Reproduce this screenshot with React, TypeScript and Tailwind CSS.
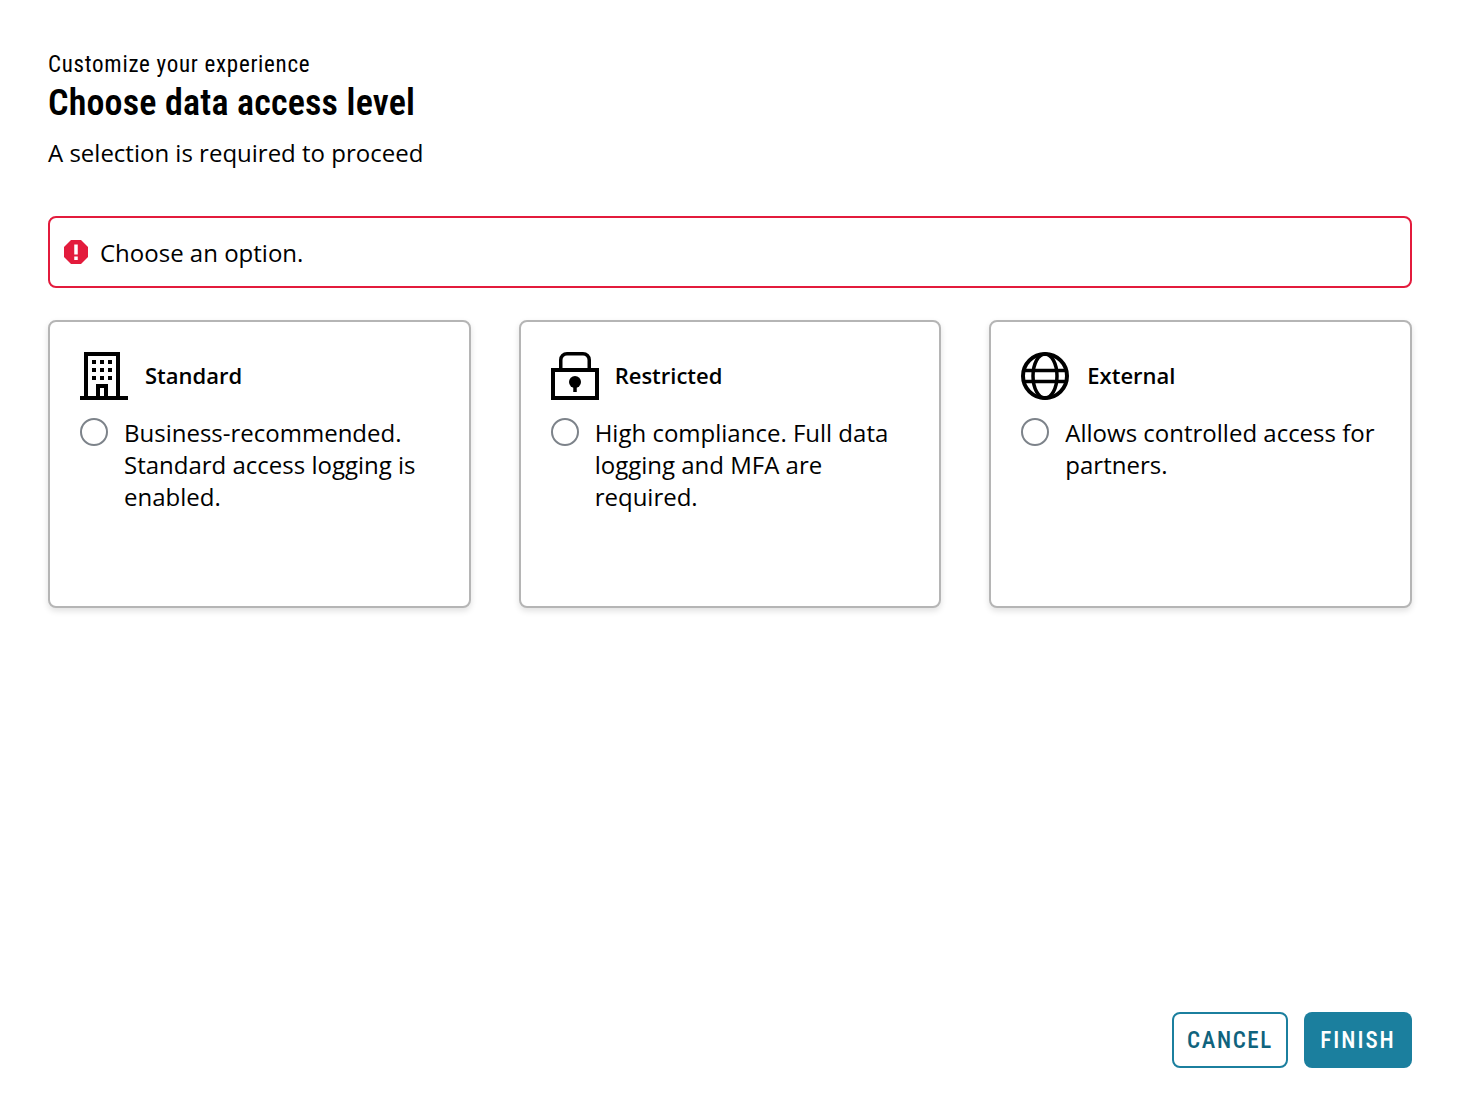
const sans = "font-['Open_Sans',sans-serif]";
const display = "font-['Roboto',sans-serif]";

function BuildingIcon() {
  return (
    <svg viewBox="0 0 48 48" className="w-12 h-12 shrink-0">
      <path fill="none" stroke="#000" strokeWidth="4" d="M6 46V2h32v44" />
      <path fill="none" stroke="#000" strokeWidth="4" d="M0 46h48" />
      <path fill="none" stroke="#000" strokeWidth="4" d="M18 46V34h8v12" />
      <path
        fill="#000"
        d="M12 8h4v4h-4zM20 8h4v4h-4zM28 8h4v4h-4zM12 16h4v4h-4zM20 16h4v4h-4zM28 16h4v4h-4zM12 24h4v4h-4zM20 24h4v4h-4zM28 24h4v4h-4z"
      />
    </svg>
  );
}

function LockIcon() {
  return (
    <svg viewBox="0 0 48 48" className="w-12 h-12 shrink-0">
      <path fill="none" stroke="#000" strokeWidth="4" d="M2 18h44v28H2z" />
      <path fill="none" stroke="#000" strokeWidth="3.500" d="M9.750 17V8a6.250 6.250 0 0 1 6.250-6.250h16A6.250 6.250 0 0 1 38.250 8v9" />
      <circle cx="24" cy="30" r="6" fill="#000" />
      <path fill="#000" d="M22.250 33h3.500v7h-3.500z" />
    </svg>
  );
}

function GlobeIcon() {
  return (
    <svg viewBox="0 0 48 48" className="w-12 h-12 shrink-0" fill="none" stroke="#000">
      <circle cx="24" cy="24" r="22" strokeWidth="4" />
      <ellipse cx="24" cy="24" rx="12" ry="22" strokeWidth="3.500" />
      <path d="M3 18.500h42M3 29.500h42" strokeWidth="3.500" />
    </svg>
  );
}

function AlertIcon() {
  return (
    <svg viewBox="0 0 24 24" className="w-6 h-6 shrink-0">
      <path fill="#e31b3c" d="M7 0h10l7 7v10l-7 7H7l-7-7V7z" />
      <path fill="#fff" d="M10.250 4.500h3.500v10h-3.500zM10.250 16.500h3.500v3.500h-3.500z" />
    </svg>
  );
}

const cards = [
  { title: "Standard", text: "Business-recommended. Standard access logging is enabled.", icon: <BuildingIcon />, gap: "gap-[17px]" },
  { title: "Restricted", text: "High compliance. Full data logging and MFA are required.", icon: <LockIcon />, gap: "gap-4" },
  { title: "External", text: "Allows controlled access for partners.", icon: <GlobeIcon />, gap: "gap-[18px]" },
];

export default function App() {
  return (
    <div className={`min-h-[1116px] bg-white text-black px-12 pt-12 pb-12 flex flex-col ${sans}`}>
      <p className={`text-[23px] leading-8 mt-px [font-stretch:85%] tracking-[0.72px] ${display}`}>Customize your experience</p>
      <h1 className={`text-[36px] leading-[44px] font-semibold [font-stretch:85%] tracking-[0.17px] ${display}`}>Choose data access level</h1>
      <p className="text-2xl leading-8 mt-3">A selection is required to proceed</p>

      <div className="mt-[47px] h-[72px] border-2 border-[#e31b3c] rounded-lg flex items-center gap-3 pl-[14px]">
        <AlertIcon />
        <span className="text-2xl mt-0.5">Choose an option.</span>
      </div>

      <div className="grid grid-cols-3 gap-12 mt-8">
        {cards.map((card) => (
          <div
            key={card.title}
            className="h-[288px] border-2 border-[#b5b5b5] rounded-lg bg-white p-[30px] shadow-[0_3px_6px_rgba(0,0,0,0.12)]"
          >
            <div className={`flex items-center ${card.gap}`}>
              {card.icon}
              <span className="text-[22px] font-semibold leading-7 -mt-0.5">{card.title}</span>
            </div>
            <div className="flex gap-4 mt-[18px]">
              <span className="w-7 h-7 rounded-full border-2 border-[#7d838a] shrink-0" />
              <p className="text-2xl leading-8 -mt-px">{card.text}</p>
            </div>
          </div>
        ))}
      </div>

      <div className="mt-auto flex justify-end gap-4">
        <button className={`h-14 w-[116px] pt-0.5 rounded-lg border-2 border-[#1b7f9e] text-[#0f637d] text-[23px] font-medium [font-stretch:85%] tracking-[1.6px] ${display}`}>
          CANCEL
        </button>
        <button className={`h-14 w-[108px] pt-0.5 rounded-lg bg-[#1b7f9e] text-white text-[23px] font-medium [font-stretch:85%] tracking-[2px] ${display}`}>
          FINISH
        </button>
      </div>
    </div>
  );
}
